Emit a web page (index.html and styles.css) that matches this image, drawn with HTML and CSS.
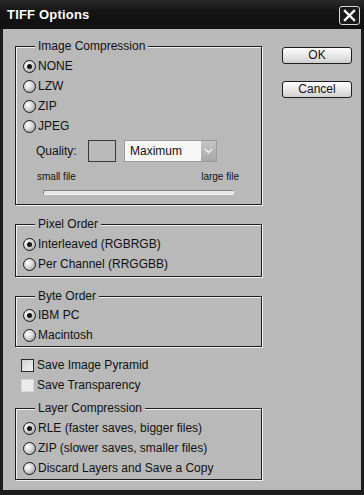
FILE: index.html
```html
<!DOCTYPE html>
<html lang="en">

<head>
    <meta charset="UTF-8">
    <meta name="viewport" content="width=device-width, initial-scale=1.0">
    <title>TIFF Options</title>
    <link rel="stylesheet" href="styles.css">
</head>

<body>
    <div class="window">
        <!-- Title bar -->
        <div class="titlebar">
            <span class="title">TIFF Options</span>
            <button class="close-btn" aria-label="Close">
                <svg width="13" height="13" viewBox="0 0 13 13">
                    <path d="M2 2 L11 11 M11 2 L2 11" stroke="#fff" stroke-width="2.4" stroke-linecap="square" fill="none"/>
                </svg>
            </button>
        </div>

        <div class="client">
            <div class="options">
                <fieldset class="group group-compression">
                    <legend>Image Compression</legend>
                    <div class="radio-row"><span class="radio checked"></span>NONE</div>
                    <div class="radio-row"><span class="radio"></span>LZW</div>
                    <div class="radio-row"><span class="radio"></span>ZIP</div>
                    <div class="radio-row"><span class="radio"></span>JPEG</div>

                    <div class="quality-row">
                        <span class="quality-label">Quality:</span>
                        <span class="quality-box"></span>
                        <span class="select">
                            <span class="select-text">Maximum</span>
                            <span class="select-arrow">
                                <svg width="9" height="6" viewBox="0 0 9 6">
                                    <path d="M1 1 L4.5 4.5 L8 1" stroke="#eee" stroke-width="1.6" fill="none"/>
                                </svg>
                            </span>
                        </span>
                    </div>
                    <div class="size-labels">
                        <span>small file</span>
                        <span>large file</span>
                    </div>
                    <div class="slider"></div>
                </fieldset>

                <fieldset class="group group-pixel">
                    <legend>Pixel Order</legend>
                    <div class="radio-row"><span class="radio checked"></span>Interleaved (RGBRGB)</div>
                    <div class="radio-row"><span class="radio"></span>Per Channel (RRGGBB)</div>
                </fieldset>

                <fieldset class="group group-byte">
                    <legend>Byte Order</legend>
                    <div class="radio-row"><span class="radio checked"></span>IBM PC</div>
                    <div class="radio-row"><span class="radio"></span>Macintosh</div>
                </fieldset>

                <div class="checks">
                    <div class="check-row"><span class="checkbox"></span>Save Image Pyramid</div>
                    <div class="check-row"><span class="checkbox disabled"></span>Save Transparency</div>
                </div>

                <fieldset class="group group-layer">
                    <legend>Layer Compression</legend>
                    <div class="radio-row"><span class="radio checked"></span>RLE (faster saves, bigger files)</div>
                    <div class="radio-row"><span class="radio"></span>ZIP (slower saves, smaller files)</div>
                    <div class="radio-row"><span class="radio"></span>Discard Layers and Save a Copy</div>
                </fieldset>
            </div>

            <div class="buttons">
                <button class="btn">OK</button>
                <button class="btn">Cancel</button>
            </div>
        </div>
    </div>
</body>

</html>
```

FILE: styles.css
```css
/* Dialog window */
body {
    margin: 0;
    background: #1a1a1a;
    font-family: "Liberation Sans", Arial, sans-serif;
    font-size: 12px;
    color: #111;
}

.window {
    width: 364px;
    height: 495px;
    background: #1c1c1c;
    display: flex;
    flex-direction: column;
}

.titlebar {
    height: 29px;
    display: flex;
    align-items: center;
    justify-content: space-between;
    padding: 0 4px 0 7px;
    background: linear-gradient(#2a2a2a, #141414 40%, #101010);
    box-sizing: border-box;
}

.title {
    color: #fff;
    font-weight: bold;
    font-size: 13px;
    letter-spacing: 0.2px;
}

.close-btn {
    width: 21px;
    height: 19px;
    margin-top: 2px;
    padding: 0;
    border: 1px solid #d8d8d8;
    border-radius: 3px;
    background: #1a1a1a;
    display: flex;
    align-items: center;
    justify-content: center;
}

.client {
    margin: 0 3px 5px 3px;
    flex: 1;
    background: #b9b9b9;
    display: flex;
    padding: 10px 0 0 12px;
}

.options {
    width: 248px;
}

/* Group boxes */
.group {
    margin: 0;
    padding: 3px 8px 2px 7px;
    border: 1px solid #1e1e1e;
    box-shadow: 1px 1px 0 #f2f2f2, inset 1px 1px 0 #f2f2f2;
    width: 247px;
    box-sizing: border-box;
}

.group legend {
    margin-left: 12px;
    padding: 0 3px;
    line-height: 14px;
    background: #b9b9b9;
}

.group-compression {
    padding-bottom: 9px;
}

.group-pixel {
    margin-top: 12px;
}

.group-byte {
    margin-top: 12px;
    padding-top: 2px;
    padding-bottom: 1px;
}

.group-layer {
    margin-top: 6px;
    padding-bottom: 1px;
}

.radio-row,
.check-row {
    height: 20px;
    display: flex;
    align-items: center;
}

.radio {
    width: 11px;
    height: 11px;
    border: 1px solid #1a1a1a;
    border-radius: 50%;
    background: radial-gradient(circle at 35% 35%, #fff, #d6d6d6 45%, #8c8c8c);
    margin-right: 2px;
    position: relative;
}

.radio.checked::after {
    content: "";
    position: absolute;
    left: 3px;
    top: 3px;
    width: 5px;
    height: 5px;
    border-radius: 50%;
    background: #111;
}

/* Quality controls */
.quality-row {
    margin-top: 4px;
    height: 22px;
    display: flex;
    align-items: center;
    padding-left: 13px;
}

.quality-label {
    width: 52px;
}

.quality-box {
    width: 26px;
    height: 20px;
    border: 1px solid #3a3a3a;
}

.select {
    margin-left: 8px;
    width: 93px;
    height: 22px;
    box-sizing: border-box;
    border: 1px solid #9a9a9a;
    background: #f7f7f7;
    display: flex;
    align-items: center;
}

.select-text {
    flex: 1;
    padding-left: 5px;
}

.select-arrow {
    width: 15px;
    height: 20px;
    background: linear-gradient(#c4c4c4, #a8a8a8);
    display: flex;
    align-items: center;
    justify-content: center;
}

.size-labels {
    margin-top: 8px;
    height: 13px;
    display: flex;
    justify-content: space-between;
    padding: 0 14px 0 14px;
    font-size: 10px;
    line-height: 13px;
}

.slider {
    margin: 7px 19px 0 20px;
    height: 3px;
    border: 1px solid #7e7e7e;
    border-bottom-color: #f4f4f4;
    border-right-color: #f4f4f4;
    border-radius: 2px;
    background: #e6e6e6;
}

/* Checkboxes */
.checks {
    margin-top: 8px;
    padding-left: 6px;
}

.checkbox {
    width: 11px;
    height: 11px;
    border: 1px solid #2a2a2a;
    background: linear-gradient(135deg, #cfcfcf, #f2f2f2);
    margin-right: 3px;
}

.checkbox.disabled {
    border-color: #d6d6d6;
    background: #ececec;
}

/* Buttons */
.buttons {
    margin-left: 19px;
    padding-top: 8px;
    display: flex;
    flex-direction: column;
    gap: 17px;
}

.btn {
    width: 70px;
    height: 17px;
    padding: 0;
    border: 1px solid #1e1e1e;
    border-radius: 3px;
    background: linear-gradient(#fdfdfd, #e4e4e4 60%, #cfcfcf);
    font-family: "Liberation Sans", Arial, sans-serif;
    font-size: 12px;
    color: #111;
    line-height: 15px;
}
```
